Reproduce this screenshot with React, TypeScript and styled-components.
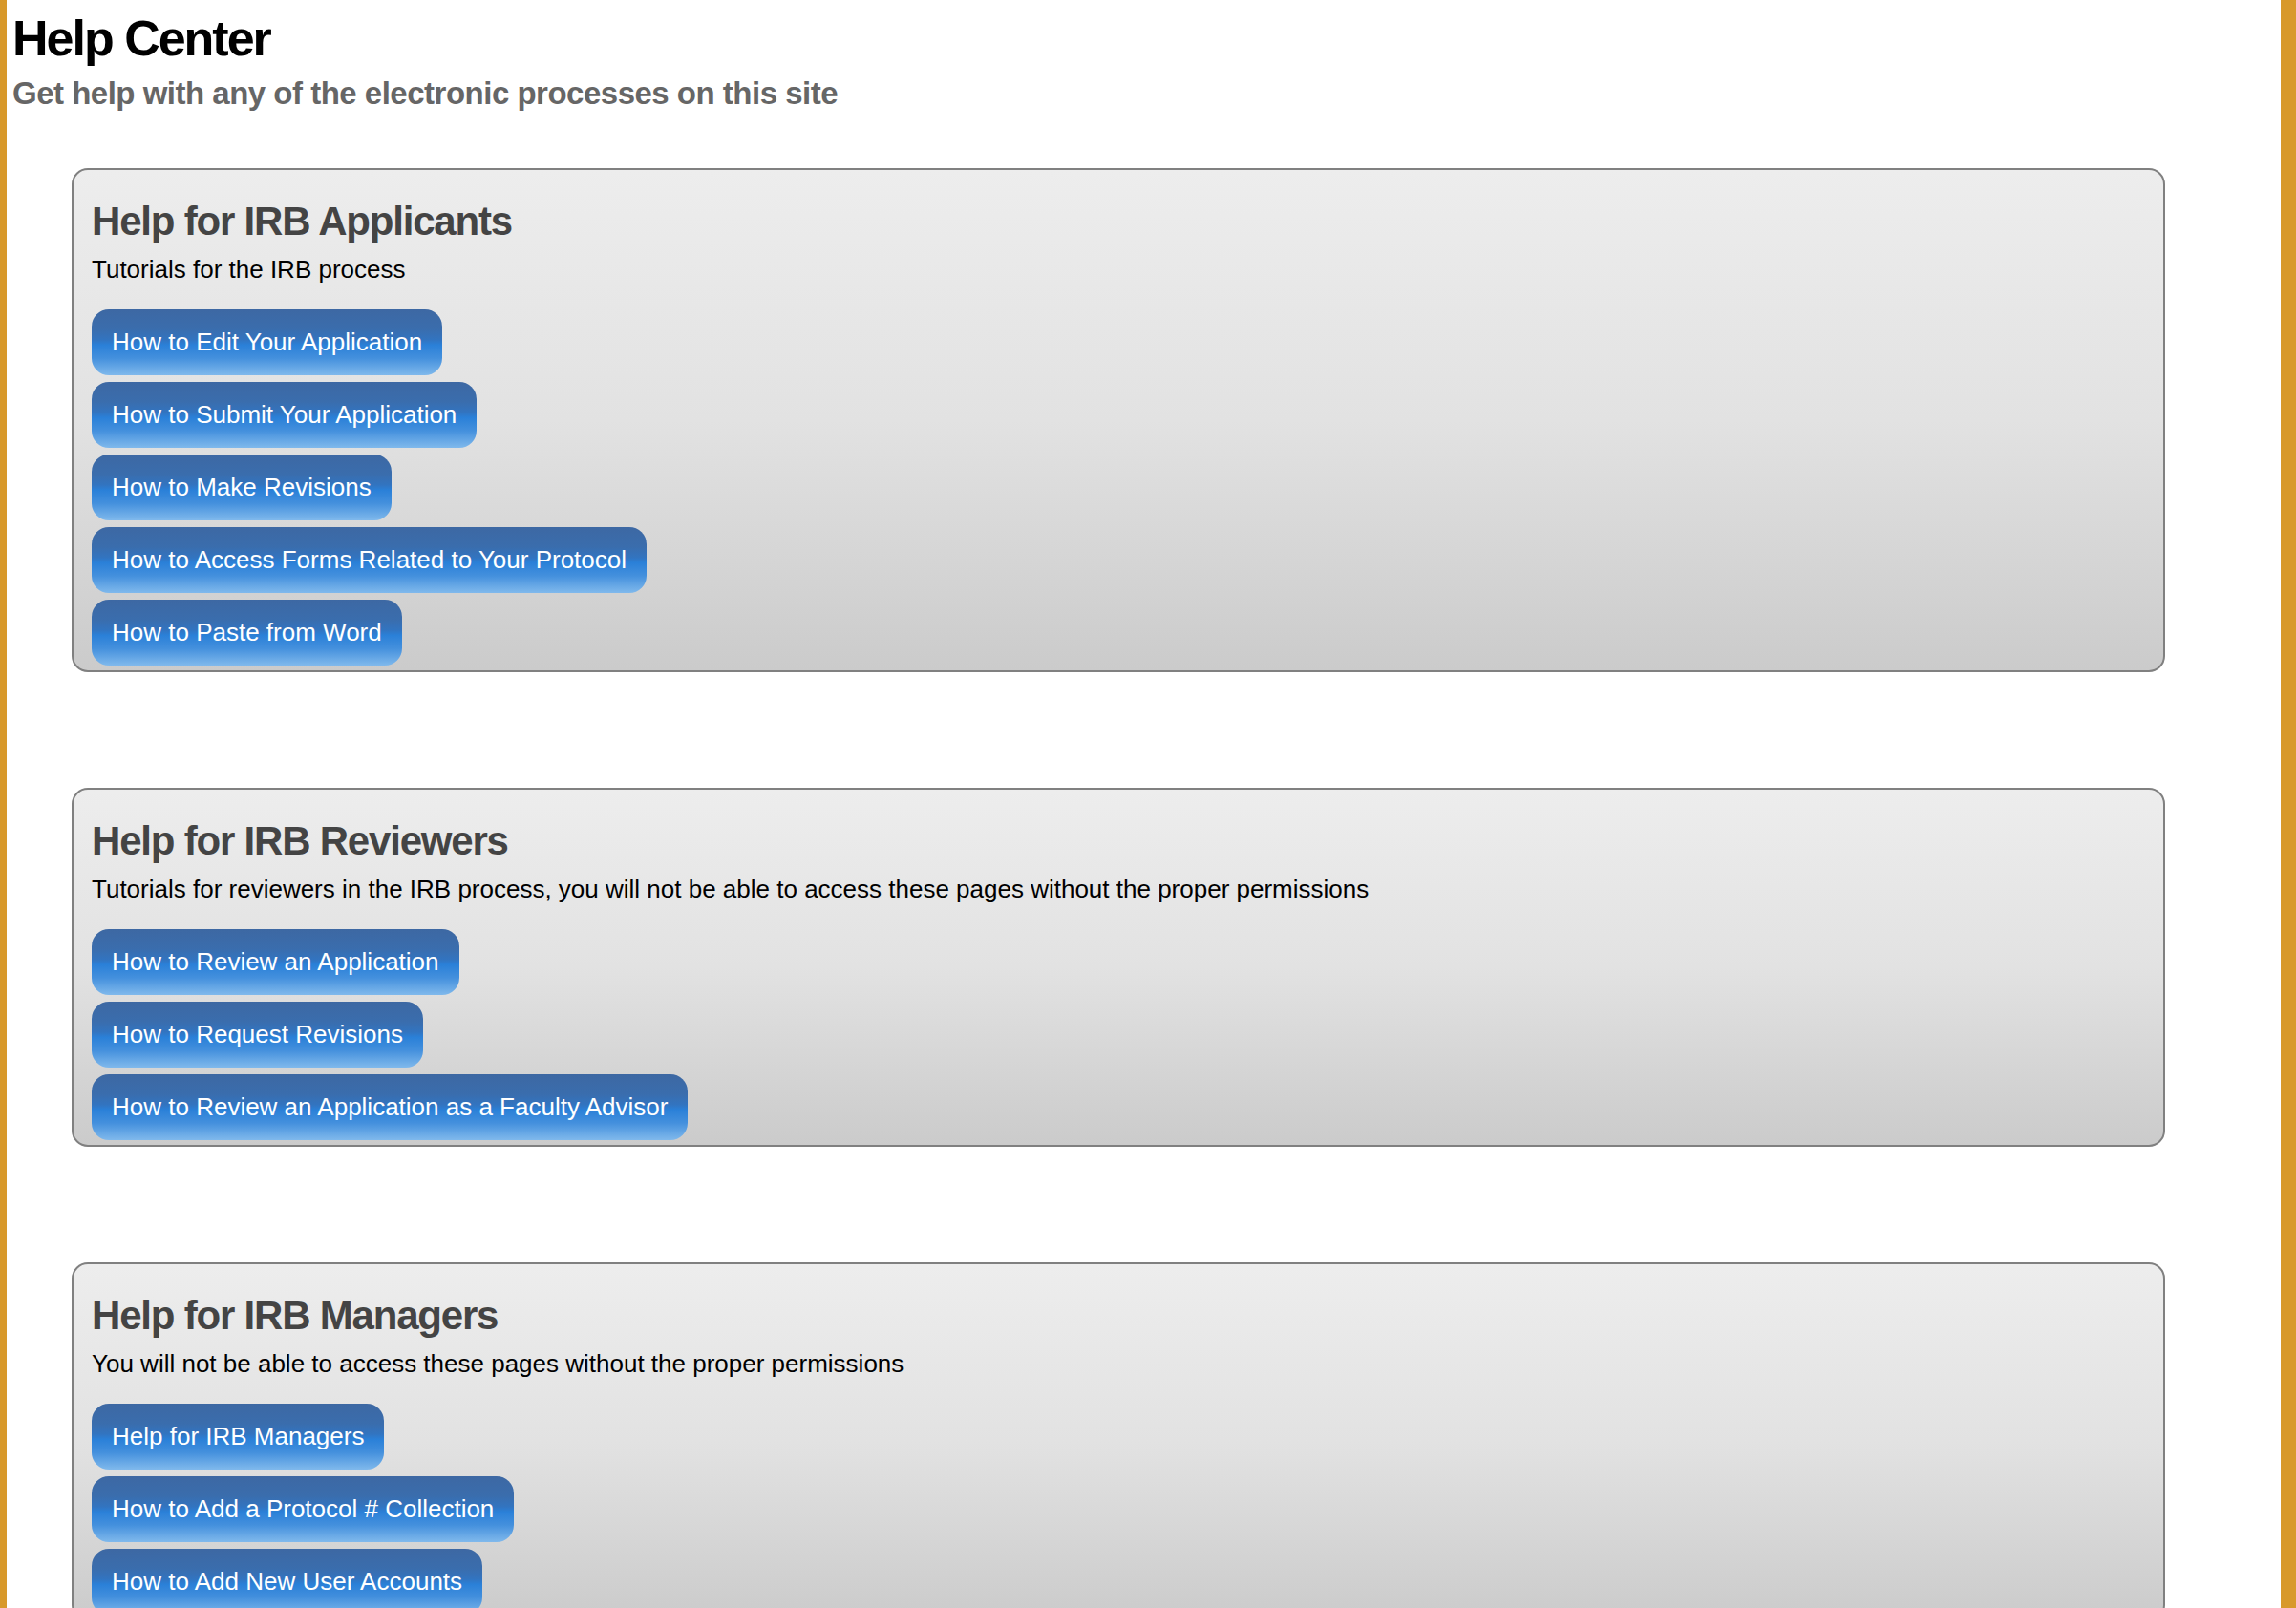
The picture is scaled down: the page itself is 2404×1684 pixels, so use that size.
import React from "react";
import styled, { createGlobalStyle } from "styled-components";

const GlobalStyle = createGlobalStyle`
  html, body {
    margin: 0;
    padding: 0;
    background: #ffffff;
  }
  body {
    font-family: "Liberation Sans", Arial, Helvetica, sans-serif;
  }
  * { box-sizing: border-box; }
`;

const Page = styled.div`
  min-height: 100vh;
  border-left: 7px solid #d8992b;
  border-right: 16px solid #d8992b;
  background: #ffffff;
  font-family: "Liberation Sans", Arial, Helvetica, sans-serif;
`;

const Header = styled.header`
  padding: 12px 0 0 6px;
`;

const Title = styled.h1`
  margin: 0;
  font-size: 52px;
  line-height: 56px;
  font-weight: 700;
  letter-spacing: -2px;
  color: #000000;
`;

const Subtitle = styled.h2`
  margin: 11px 0 0 0;
  font-size: 33px;
  line-height: 37px;
  font-weight: 700;
  letter-spacing: -0.5px;
  color: #666666;
`;

const Sections = styled.main`
  display: flex;
  flex-direction: column;
  gap: 121px;
  padding: 60px 121px 0 68px;
`;

const Panel = styled.section`
  border: 2px solid #808080;
  border-radius: 17px;
  background: linear-gradient(to bottom, #ededed 0%, #e2e2e2 50%, #cbcbcb 100%);
  padding: 31px 19px 5px 19px;
`;

const PanelTitle = styled.h3`
  margin: 0;
  font-size: 42px;
  line-height: 46px;
  font-weight: 700;
  letter-spacing: -1.2px;
  color: #444444;
`;

const PanelText = styled.p`
  margin: 12px 0 0 0;
  font-size: 26px;
  line-height: 30px;
  color: #000000;
`;

const LinkList = styled.div`
  display: flex;
  flex-direction: column;
  align-items: flex-start;
  gap: 7px;
  margin-top: 27px;
`;

const LinkButton = styled.a`
  display: inline-block;
  padding: 20px 21px;
  font-size: 26px;
  line-height: 29px;
  color: #ffffff;
  text-decoration: none;
  border-radius: 18px;
  white-space: nowrap;
  background: linear-gradient(
    to bottom,
    #3d68a3 0%,
    #3a6dad 30%,
    #3274c0 46%,
    #2a80d8 54%,
    #4490dd 74%,
    #80b9ec 100%
  );
`;

type Section = { title: string; text: string; links: string[] };

const sections: Section[] = [
  {
    title: "Help for IRB Applicants",
    text: "Tutorials for the IRB process",
    links: [
      "How to Edit Your Application",
      "How to Submit Your Application",
      "How to Make Revisions",
      "How to Access Forms Related to Your Protocol",
      "How to Paste from Word",
    ],
  },
  {
    title: "Help for IRB Reviewers",
    text: "Tutorials for reviewers in the IRB process, you will not be able to access these pages without the proper permissions",
    links: [
      "How to Review an Application",
      "How to Request Revisions",
      "How to Review an Application as a Faculty Advisor",
    ],
  },
  {
    title: "Help for IRB Managers",
    text: "You will not be able to access these pages without the proper permissions",
    links: [
      "Help for IRB Managers",
      "How to Add a Protocol # Collection",
      "How to Add New User Accounts",
    ],
  },
];

export default function App() {
  return (
    <Page>
      <GlobalStyle />
      <Header>
        <Title>Help Center</Title>
        <Subtitle>Get help with any of the electronic processes on this site</Subtitle>
      </Header>
      <Sections>
        {sections.map((s) => (
          <Panel key={s.title}>
            <PanelTitle>{s.title}</PanelTitle>
            <PanelText>{s.text}</PanelText>
            <LinkList>
              {s.links.map((l) => (
                <LinkButton key={l} href="#">
                  {l}
                </LinkButton>
              ))}
            </LinkList>
          </Panel>
        ))}
      </Sections>
    </Page>
  );
}
